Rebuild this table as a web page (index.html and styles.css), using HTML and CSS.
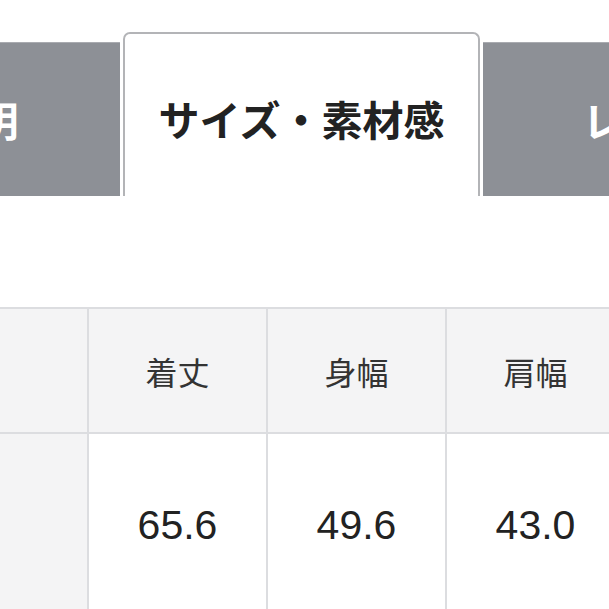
FILE: index.html
```html
<!DOCTYPE html>
<html lang="ja">
<head>
<meta charset="utf-8">
<link rel="stylesheet" href="styles.css">
</head>
<body>
<div class="tabs">
  <div class="tab tab-prev">商品説明</div>
  <div class="tab tab-active">サイズ・素材感</div>
  <div class="tab tab-next">レビュー</div>
</div>
<table class="size-table">
  <tr class="head">
    <th class="label"></th>
    <th>着丈</th>
    <th>身幅</th>
    <th>肩幅</th>
  </tr>
  <tr class="body">
    <td class="label"></td>
    <td>65.6</td>
    <td>49.6</td>
    <td>43.0</td>
  </tr>
</table>
</body>
</html>
```
FILE: styles.css
```css
html, body {
  margin: 0;
  padding: 0;
  background: #ffffff;
  overflow: hidden;
}
body {
  width: 609px;
  height: 609px;
  font-family: "Noto Sans CJK JP", "Noto Sans", sans-serif;
}
.tabs {
  display: flex;
  align-items: flex-end;
  gap: 3px;
  margin-top: 32px;
  margin-left: -237px;
  width: 1200px;
}
.tab {
  box-sizing: border-box;
  width: 357px;
  height: 154px;
  flex: none;
  display: flex;
  align-items: center;
  justify-content: center;
  background: #8d9096;
  border-top: 1px solid #a9abb0;
  color: #ffffff;
  font-size: 41px;
  font-weight: 700;
  line-height: 1;
}
.tab-prev {
  padding-right: 10px;
}
.tab-next {
  padding-left: 6px;
}
.tab-active {
  height: 164px;
  background: #ffffff;
  color: #222222;
  border: 2px solid #b3b4b7;
  border-bottom: none;
  border-radius: 7px 7px 0 0;
  padding-top: 6px;
}
.size-table {
  margin-top: 111px;
  margin-left: -92px;
  border-collapse: collapse;
  table-layout: fixed;
  width: 710px;
}
.size-table th,
.size-table td {
  width: 177px;
  border: 2px solid #dcdde0;
  text-align: center;
  padding: 0;
}
.head th {
  height: 123px;
  background: #f4f4f5;
  font-weight: 400;
  font-size: 32px;
  color: #333333;
}
.body td {
  height: 182px;
  background: #ffffff;
  font-family: "Liberation Sans", Arial, sans-serif;
  font-size: 41px;
  color: #222222;
}
.body td.label {
  background: #f4f4f5;
}
```
